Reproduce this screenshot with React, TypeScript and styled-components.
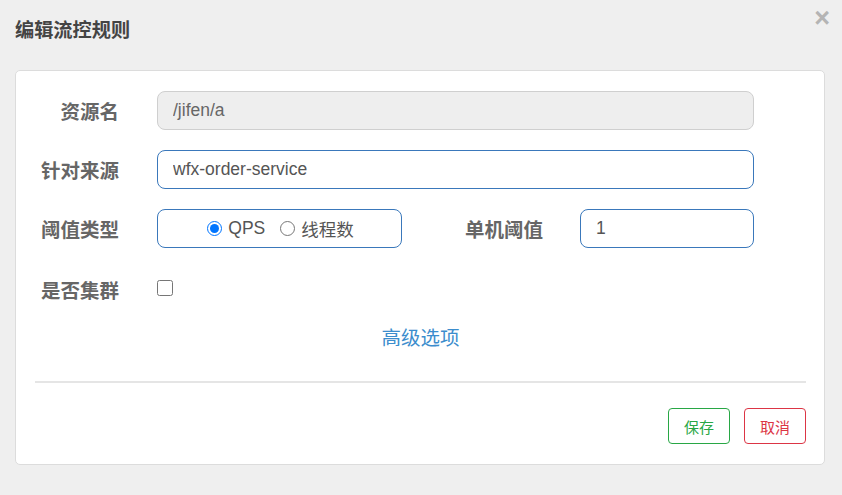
import React from "react";
import styled, { createGlobalStyle } from "styled-components";

const Global = createGlobalStyle`
  html, body { margin: 0; padding: 0; }
  body {
    background: #efefef;
    font-family: "Liberation Sans", "Noto Sans CJK SC", sans-serif;
    width: 842px;
    height: 495px;
    overflow: hidden;
  }
  * { box-sizing: border-box; }
`;

const Page = styled.div`
  width: 842px;
  height: 495px;
  display: flex;
  flex-direction: column;
`;

const Header = styled.div`
  height: 70px;
  display: flex;
  align-items: flex-start;
  padding: 16px 12px 0 15px;
`;

const Title = styled.h4`
  margin: 0;
  font-family: "Noto Sans CJK SC", sans-serif;
  font-size: 19.2px;
  font-weight: 700;
  line-height: 27px;
  color: #444;
`;

const Close = styled.button`
  margin-left: auto;
  margin-top: -11px;
  padding: 0;
  border: 0;
  background: transparent;
  font-family: "Liberation Sans", sans-serif;
  font-size: 27px;
  font-weight: 700;
  line-height: 1;
  color: #b4b4b4;
  cursor: pointer;
`;

const Card = styled.div`
  margin: 0 17px 0 15px;
  background: #fff;
  border: 1px solid #dcdcdc;
  border-radius: 5px;
  padding: 20px 18px 20px 19px;
  display: flex;
  flex-direction: column;
`;

const Rows = styled.div`
  display: flex;
  flex-direction: column;
  gap: 20px;
`;

const Row = styled.div<{ $h?: number }>`
  display: flex;
  align-items: center;
  height: ${(p) => p.$h ?? 39}px;
`;

const Label = styled.label<{ $w: number; $gap: number }>`
  width: ${(p) => p.$w}px;
  margin-right: ${(p) => p.$gap}px;
  flex: none;
  text-align: right;
  font-family: "Noto Sans CJK SC", sans-serif;
  font-size: 19.5px;
  font-weight: 700;
  color: #666;
  white-space: nowrap;
`;

const TextInput = styled.input<{ $w: number }>`
  width: ${(p) => p.$w}px;
  height: 39px;
  flex: none;
  padding: 0 15px;
  border: 1px solid #3a78bb;
  border-radius: 8px;
  background: #fff;
  font-family: "Liberation Sans", sans-serif;
  font-size: 17.5px;
  color: #555;
  outline: none;
  &:disabled {
    background: #eeeeee;
    border-color: #cfcfcf;
    color: #666;
  }
`;

const RadioBox = styled.div`
  width: 245px;
  height: 39px;
  flex: none;
  border: 1px solid #3a78bb;
  border-radius: 8px;
  display: flex;
  align-items: center;
  justify-content: center;
  gap: 15px;
  padding-left: 2px;
`;

const RadioLabel = styled.label`
  display: flex;
  align-items: center;
  gap: 6px;
  font-family: "Liberation Sans", "Noto Sans CJK SC", sans-serif;
  font-size: 17.5px;
  color: #555;
`;

const Radio = styled.input`
  width: 15px;
  height: 15px;
  margin: 0;
`;

const Check = styled.input`
  width: 16px;
  height: 16px;
  margin: -3px 0 0;
`;

const Advanced = styled.a`
  margin-top: 12px;
  align-self: center;
  font-family: "Noto Sans CJK SC", sans-serif;
  font-size: 19.5px;
  line-height: 27px;
  color: #3c8dcd;
  text-decoration: none;
  cursor: pointer;
`;

const Divider = styled.hr`
  margin: 31px 0 0;
  border: 0;
  height: 2px;
  background: #e5e5e5;
`;

const Footer = styled.div`
  margin-top: 25px;
  display: flex;
  justify-content: flex-end;
  gap: 14px;
`;

const Btn = styled.button<{ $color: string }>`
  width: 62px;
  height: 36px;
  padding: 0;
  background: #fff;
  border: 1px solid ${(p) => p.$color};
  border-radius: 4px;
  color: ${(p) => p.$color};
  font-family: "Noto Sans CJK SC", sans-serif;
  font-size: 15px;
  font-weight: 400;
  cursor: pointer;
`;

export default function App() {
  return (
    <Page>
      <Global />
      <Header>
        <Title>编辑流控规则</Title>
        <Close aria-label="close">×</Close>
      </Header>
      <Card>
        <Rows>
          <Row>
            <Label $w={84} $gap={38}>资源名</Label>
            <TextInput $w={597} disabled value="/jifen/a" readOnly />
          </Row>
          <Row>
            <Label $w={84} $gap={38}>针对来源</Label>
            <TextInput $w={597} defaultValue="wfx-order-service" />
          </Row>
          <Row>
            <Label $w={84} $gap={38}>阈值类型</Label>
            <RadioBox>
              <RadioLabel>
                <Radio type="radio" name="grade" defaultChecked />
                QPS
              </RadioLabel>
              <RadioLabel>
                <Radio type="radio" name="grade" />
                线程数
              </RadioLabel>
            </RadioBox>
            <Label $w={141} $gap={37}>单机阈值</Label>
            <TextInput $w={174} defaultValue="1" />
          </Row>
          <Row $h={43}>
            <Label $w={84} $gap={38}>是否集群</Label>
            <Check type="checkbox" />
          </Row>
        </Rows>
        <Advanced>高级选项</Advanced>
        <Divider />
        <Footer>
          <Btn $color="#28a745">保存</Btn>
          <Btn $color="#dc3545">取消</Btn>
        </Footer>
      </Card>
    </Page>
  );
}
